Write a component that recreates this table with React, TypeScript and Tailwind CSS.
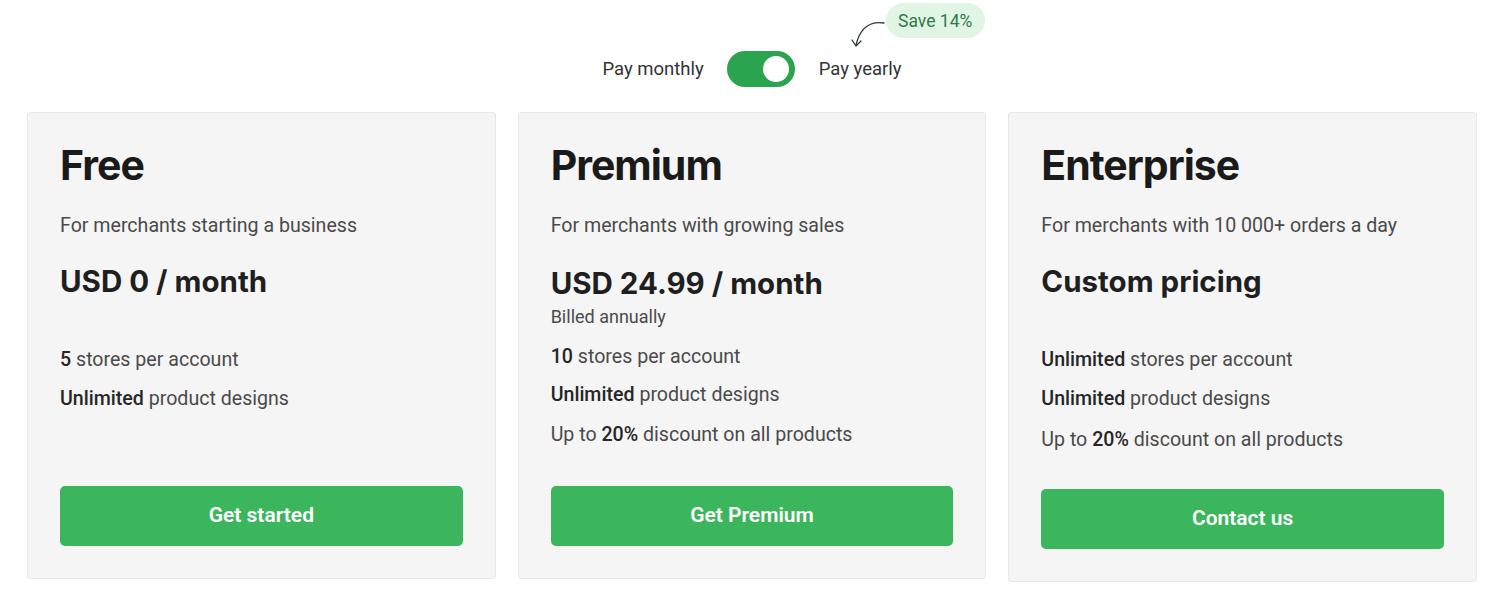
import React, { useState } from 'react';

type Feature = { strong?: string; text: string; prefix?: string };

const body = { fontFamily: 'Roboto, "Liberation Sans", sans-serif' };
const heading = { fontFamily: 'Inter, "Liberation Sans", sans-serif' };

const FeatureLine: React.FC<{ f: Feature; className?: string }> = ({ f, className }) => (
  <p className={`text-[19.6px] leading-[28px] text-[#4a4a4a] ${className ?? ''}`}>
    {f.prefix}
    {f.strong && <span className="font-medium text-[#262626]">{f.strong}</span>} {f.text}
  </p>
);

const App: React.FC = () => {
  const [yearly, setYearly] = useState(true);

  return (
    <div className="min-h-screen bg-white" style={body}>
      {/* Billing toggle */}
      <div className="flex justify-center pt-[51px]">
        <div className="flex items-center">
          <span className="text-[18.5px] leading-[24px] text-[#333]">Pay monthly</span>
          <button
            onClick={() => setYearly(!yearly)}
            className={`ml-[23px] mr-[24px] flex h-[36px] w-[68px] items-center rounded-full px-[6px] ${
              yearly ? 'justify-end bg-[#2aa44f]' : 'justify-start bg-gray-300'
            }`}
          >
            <span className="h-[26px] w-[26px] rounded-full bg-white" />
          </button>
          <span className="relative text-[18.5px] leading-[24px] text-[#333]">
            Pay yearly
            <span className="absolute left-[67px] top-[-54px] flex h-[35px] w-[99px] items-center justify-center whitespace-nowrap rounded-full bg-[#e1f5e5] text-[17.5px] text-[#2f7a4a]">
              Save 14%
            </span>
            <svg
              className="absolute left-[30px] top-[-39px]"
              width="40"
              height="32"
              viewBox="0 0 40 32"
              fill="none"
              stroke="#2d3b33"
              strokeWidth="1.3"
              strokeLinecap="round"
              strokeLinejoin="round"
            >
              <path d="M35 5 Q13 2 7 27" />
              <path d="M3 22 L7 28 L12 23" />
            </svg>
          </span>
        </div>
      </div>

      {/* Plans */}
      <div className="mt-[25px] grid grid-cols-3 items-start gap-[22px] px-[27px]">
        {/* Free */}
        <div className="flex h-[467px] flex-col rounded-[3px] border border-[#e8e8e8] bg-[#f5f5f6] px-[32px] pb-[32px] pt-[28px]">
          <h2 className="text-[41px] font-bold leading-[48px] tracking-[-1px] text-[#1a1a1a]" style={heading}>
            Free
          </h2>
          <p className="mt-[23px] text-[19.6px] leading-[28px] text-[#4a4a4a]">For merchants starting a business</p>
          <p className="mt-[23px] text-[29.5px] font-bold leading-[36px] text-[#1f1f1f]" style={heading}>
            USD 0 / month
          </p>
          <FeatureLine className="mt-[47px]" f={{ strong: '5', text: 'stores per account' }} />
          <FeatureLine className="mt-[11px]" f={{ strong: 'Unlimited', text: 'product designs' }} />
          <button className="mt-auto h-[60px] w-full rounded-[5px] bg-[#3bb65d] text-[21px] font-semibold text-white">
            Get started
          </button>
        </div>

        {/* Premium */}
        <div className="flex h-[467px] flex-col rounded-[3px] border border-[#e8e8e8] bg-[#f5f5f6] px-[32px] pb-[32px] pt-[28px]">
          <h2 className="text-[41px] font-bold leading-[48px] tracking-[-1px] text-[#1a1a1a]" style={heading}>
            Premium
          </h2>
          <p className="mt-[23px] text-[19.6px] leading-[28px] text-[#4a4a4a]">For merchants with growing sales</p>
          <p className="mt-[25px] text-[29.5px] font-bold leading-[36px] text-[#1f1f1f]" style={heading}>
            USD 24.99 / month
          </p>
          <p className="mt-[6px] text-[18px] leading-[20px] text-[#4a4a4a]">Billed annually</p>
          <FeatureLine className="mt-[16px]" f={{ strong: '10', text: 'stores per account' }} />
          <FeatureLine className="mt-[10px]" f={{ strong: 'Unlimited', text: 'product designs' }} />
          <p className="mt-[12px] text-[19.6px] leading-[28px] text-[#4a4a4a]">
            Up to <span className="font-medium text-[#262626]">20%</span> discount on all products
          </p>
          <button className="mt-auto h-[60px] w-full rounded-[5px] bg-[#3bb65d] text-[21px] font-semibold text-white">
            Get Premium
          </button>
        </div>

        {/* Enterprise */}
        <div className="flex h-[470px] flex-col rounded-[3px] border border-[#e8e8e8] bg-[#f5f5f6] px-[32px] pb-[32px] pt-[28px]">
          <h2 className="text-[41px] font-bold leading-[48px] tracking-[-1px] text-[#1a1a1a]" style={heading}>
            Enterprise
          </h2>
          <p className="mt-[23px] text-[19.6px] leading-[28px] text-[#4a4a4a]">For merchants with 10 000+ orders a day</p>
          <p className="mt-[23px] text-[29.5px] font-bold leading-[36px] text-[#1f1f1f]" style={heading}>
            Custom pricing
          </p>
          <FeatureLine className="mt-[47px]" f={{ strong: 'Unlimited', text: 'stores per account' }} />
          <FeatureLine className="mt-[11px]" f={{ strong: 'Unlimited', text: 'product designs' }} />
          <p className="mt-[13px] text-[19.6px] leading-[28px] text-[#4a4a4a]">
            Up to <span className="font-medium text-[#262626]">20%</span> discount on all products
          </p>
          <button className="mt-auto h-[60px] w-full rounded-[5px] bg-[#3bb65d] text-[21px] font-semibold text-white">
            Contact us
          </button>
        </div>
      </div>
    </div>
  );
};

export default App;
